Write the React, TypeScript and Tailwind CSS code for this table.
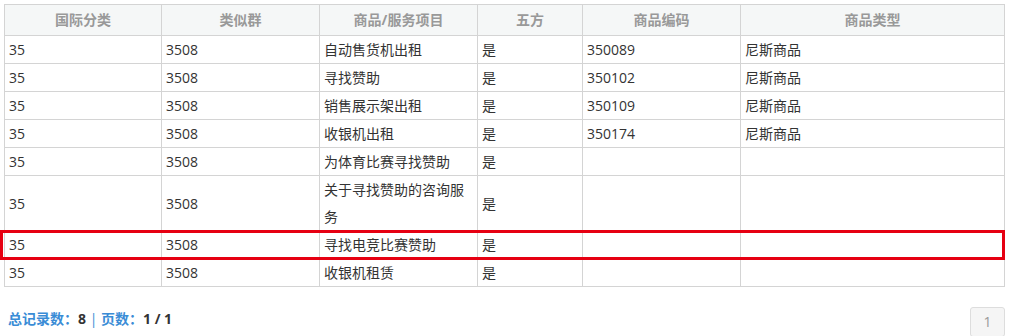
import React from "react";

const rows: string[][] = [
  ["35", "3508", "自动售货机出租", "是", "350089", "尼斯商品"],
  ["35", "3508", "寻找赞助", "是", "350102", "尼斯商品"],
  ["35", "3508", "销售展示架出租", "是", "350109", "尼斯商品"],
  ["35", "3508", "收银机出租", "是", "350174", "尼斯商品"],
  ["35", "3508", "为体育比赛寻找赞助", "是", "", ""],
  ["35", "3508", "关于寻找赞助的咨询服务", "是", "", ""],
  ["35", "3508", "寻找电竞比赛赞助", "是", "", ""],
  ["35", "3508", "收银机租赁", "是", "", ""],
];

const headers = ["国际分类", "类似群", "商品/服务项目", "五方", "商品编码", "商品类型"];

export default function App() {
  return (
    <div
      className="relative w-[1009px] h-[336px] overflow-hidden bg-white"
      style={{ fontFamily: '"Open Sans", "Noto Sans CJK SC", sans-serif' }}
    >
      <div className="pt-[4px] pl-[4px]">
        <div className="grid grid-cols-[157px_158px_158px_105px_158px_264px] w-[1001px] border-l border-t border-[#d4d4d4]">
          {headers.map((h) => (
            <div
              key={h}
              className="border-r border-b border-[#d4d4d4] bg-[#f5f7f7] text-center text-[14px] leading-[30px] font-bold text-[#999999]"
            >
              {h}
            </div>
          ))}
          {rows.map((r, i) =>
            r.map((c, j) => (
              <div
                key={i + "-" + j}
                className="border-r border-b border-[#d4d4d4] px-[4px] text-[14px] leading-[27px] text-[#333333] flex items-center"
              >
                <span>{c}</span>
              </div>
            ))
          )}
        </div>
      </div>
      <div className="absolute left-0 top-[230px] w-[1005px] h-[30px] border-[3px] border-[#e60012] pointer-events-none" />
      <div className="mt-[20px] flex justify-between items-start pl-[8px] pr-[4px]">
        <div className="mt-[2px] leading-5 text-[14px] font-bold text-[#3a8cd6]">
          总记录数：<span className="text-[#333333]">8</span>
          <span className="font-normal"> | </span>页数：
          <span className="text-[#333333]">1 / 1</span>
        </div>
        <div className="w-[35px] h-[30px] rounded-[3px] border border-[#dddddd] bg-[#f5f5f5] text-[#999999] text-[14px] leading-[28px] text-center">
          1
        </div>
      </div>
    </div>
  );
}
